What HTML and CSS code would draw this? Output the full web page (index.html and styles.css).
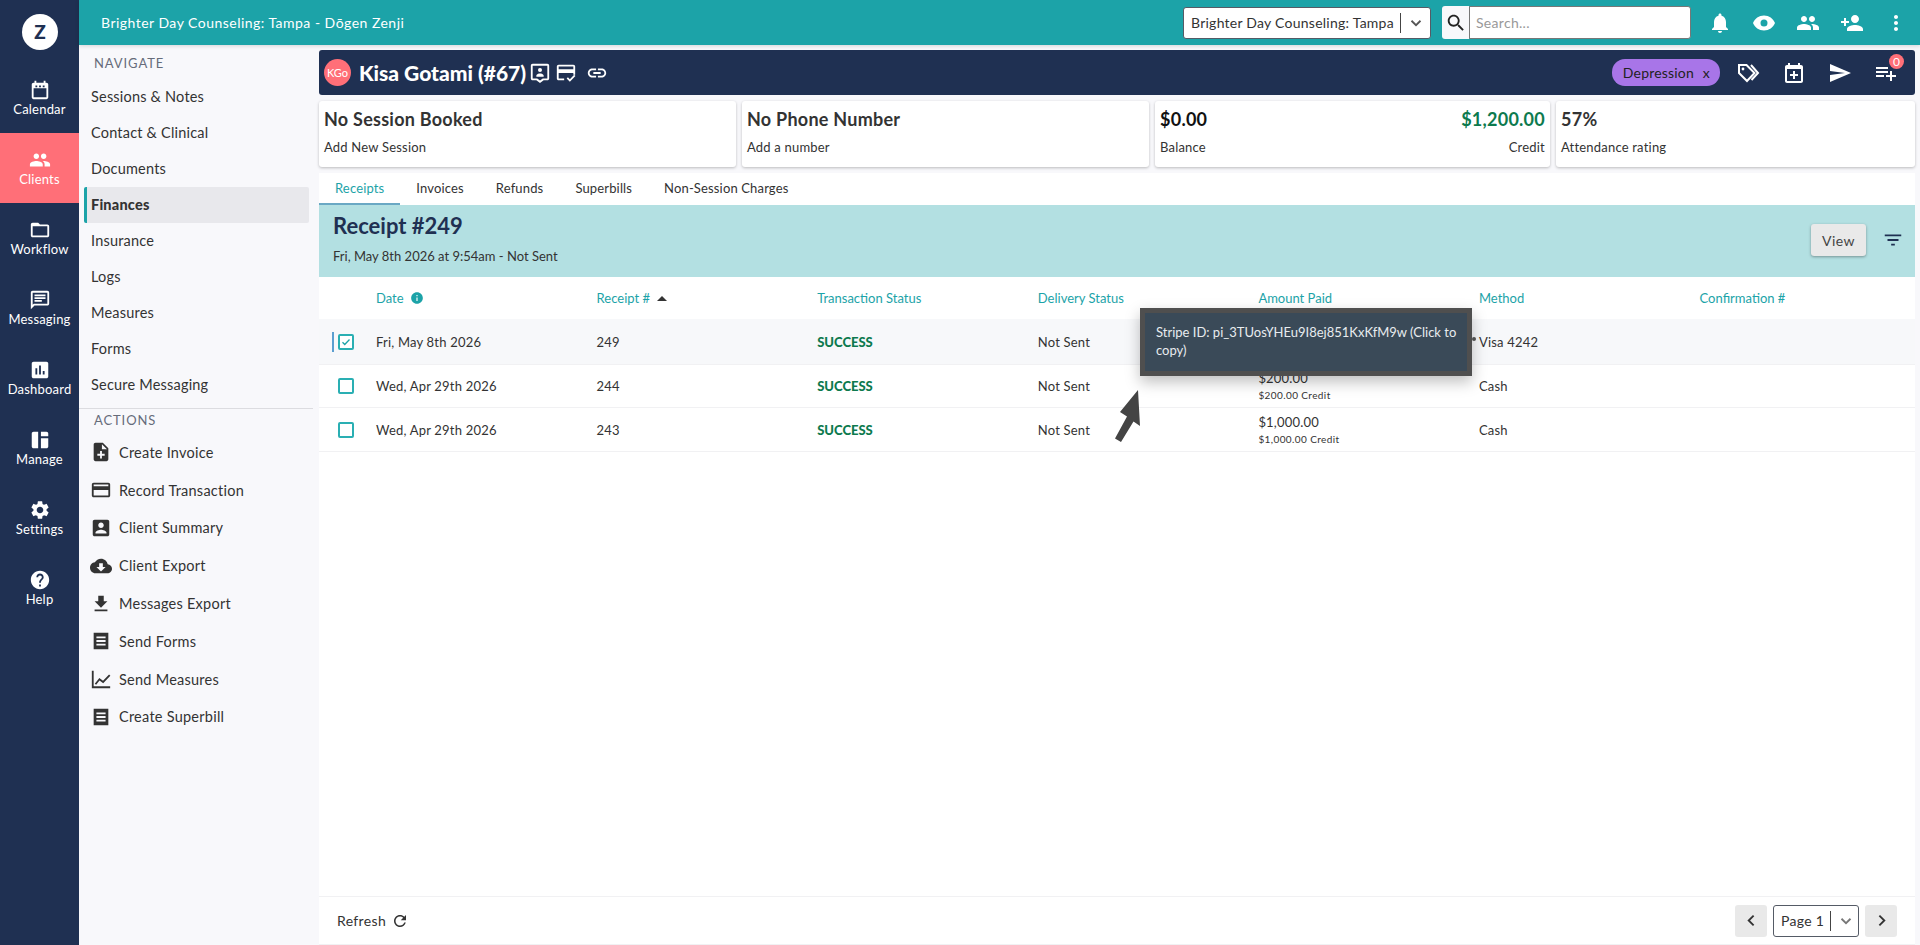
FILE: index.html
```html
<!DOCTYPE html>
<html lang="en">
<head>
    <meta charset="UTF-8">
    <meta name="viewport" content="width=device-width, initial-scale=1.0">
    <title>Receipts</title>
    <link rel="stylesheet" href="styles.css">
</head>
<body>
<div class="app">
    <!-- main rail -->
    <aside class="rail">
        <div class="logo_wrap"><div class="logo">Z</div></div>
        <a class="rail_item">
            <svg viewBox="0 0 24 24"><path d="M19 4h-1V2h-2v2H8V2H6v2H5c-1.1 0-2 .9-2 2v14c0 1.1.9 2 2 2h14c1.1 0 2-.9 2-2V6c0-1.1-.9-2-2-2zm0 16H5V10h14v10zM7 7h2v2H7zm4 0h2v2h-2zm4 0h2v2h-2z"/></svg>
            Calendar
        </a>
        <a class="rail_item on">
            <svg viewBox="0 0 24 24"><path d="M16 11c1.66 0 2.99-1.34 2.99-3S17.66 5 16 5c-1.66 0-3 1.34-3 3s1.34 3 3 3zm-8 0c1.66 0 2.99-1.34 2.99-3S9.66 5 8 5C6.34 5 5 6.34 5 8s1.34 3 3 3zm0 2c-2.33 0-7 1.17-7 3.5V19h14v-2.5c0-2.33-4.67-3.5-7-3.5zm8 0c-.29 0-.62.02-.97.05 1.16.84 1.97 1.97 1.97 3.45V19h6v-2.5c0-2.33-4.67-3.5-7-3.5z"/></svg>
            Clients
        </a>
        <a class="rail_item">
            <svg viewBox="0 0 24 24"><path d="M20 6h-8l-2-2H4c-1.1 0-2 .9-2 2v12c0 1.1.9 2 2 2h16c1.1 0 2-.9 2-2V8c0-1.1-.9-2-2-2zm0 12H4V8h16v10z"/></svg>
            Workflow
        </a>
        <a class="rail_item">
            <svg viewBox="0 0 24 24"><path d="M20 2H4c-1.1 0-2 .9-2 2v18l4-4h14c1.1 0 2-.9 2-2V4c0-1.1-.9-2-2-2zm0 14H5.17L4 17.17V4h16v12zM6 12h8v2H6zm0-3h12v2H6zm0-3h12v2H6z"/></svg>
            Messaging
        </a>
        <a class="rail_item">
            <svg viewBox="0 0 24 24"><path d="M19 3H5c-1.1 0-2 .9-2 2v14c0 1.1.9 2 2 2h14c1.1 0 2-.9 2-2V5c0-1.1-.9-2-2-2zM9 17H7v-7h2v7zm4 0h-2V7h2v10zm4 0h-2v-4h2v4z"/></svg>
            Dashboard
        </a>
        <a class="rail_item">
            <svg viewBox="0 0 24 24"><path d="M5 3h5v18H5c-1.1 0-2-.9-2-2V5c0-1.1.9-2 2-2zm8 0h6c1.1 0 2 .9 2 2v3h-8zm0 7h8v9c0 1.1-.9 2-2 2h-6z"/></svg>
            Manage
        </a>
        <a class="rail_item">
            <svg viewBox="0 0 24 24"><path d="M19.14 12.94c.04-.3.06-.61.06-.94 0-.32-.02-.64-.07-.94l2.03-1.58c.18-.14.23-.41.12-.61l-1.92-3.32c-.12-.22-.37-.29-.59-.22l-2.39.96c-.5-.38-1.03-.7-1.62-.94l-.36-2.54c-.04-.24-.24-.41-.48-.41h-3.84c-.24 0-.43.17-.47.41l-.36 2.54c-.59.24-1.13.57-1.62.94l-2.39-.96c-.22-.08-.47 0-.59.22L2.74 8.87c-.12.21-.08.47.12.61l2.03 1.58c-.05.3-.09.63-.09.94s.02.64.07.94l-2.03 1.58c-.18.14-.23.41-.12.61l1.92 3.32c.12.22.37.29.59.22l2.39-.96c.5.38 1.03.7 1.62.94l.36 2.54c.05.24.24.41.48.41h3.84c.24 0 .44-.17.47-.41l.36-2.54c.59-.24 1.13-.56 1.62-.94l2.39.96c.22.08.47 0 .59-.22l1.92-3.32c.12-.22.07-.47-.12-.61l-2.01-1.58zM12 15.6c-1.98 0-3.6-1.62-3.6-3.6s1.62-3.6 3.6-3.6 3.6 1.62 3.6 3.6-1.62 3.6-3.6 3.6z"/></svg>
            Settings
        </a>
        <a class="rail_item">
            <svg viewBox="0 0 24 24"><path d="M12 2C6.48 2 2 6.48 2 12s4.48 10 10 10 10-4.48 10-10S17.52 2 12 2zm1 17h-2v-2h2v2zm2.07-7.75l-.9.92C13.45 12.9 13 13.5 13 15h-2v-.5c0-1.1.45-2.1 1.17-2.83l1.24-1.26c.37-.36.59-.86.59-1.41 0-1.1-.9-2-2-2s-2 .9-2 2H8c0-2.21 1.79-4 4-4s4 1.79 4 4c0 .88-.36 1.68-.93 2.25z"/></svg>
            Help
        </a>
    </aside>

    <div class="right">
        <!-- top bar -->
        <header class="topbar">
            <div class="practice">Brighter Day Counseling: Tampa - Dōgen Zenji</div>
            <div class="select practice_select">
                <span class="select_text">Brighter Day Counseling: Tampa</span>
                <span class="select_sep"></span>
                <svg viewBox="0 0 24 24"><path d="M6 9l6 6 6-6" fill="none" stroke="#555" stroke-width="2.4"/></svg>
            </div>
            <div class="search">
                <span class="search_btn"><svg viewBox="0 0 24 24"><path d="M15.5 14h-.79l-.28-.27C15.41 12.59 16 11.11 16 9.5 16 5.91 13.09 3 9.5 3S3 5.91 3 9.5 5.91 16 9.5 16c1.61 0 3.09-.59 4.23-1.57l.27.28v.79l5 4.99L20.49 19l-4.99-5zm-6 0C7.01 14 5 11.99 5 9.5S7.01 5 9.5 5 14 7.01 14 9.5 11.99 14 9.5 14z"/></svg></span>
                <span class="search_input">Search...</span>
            </div>
            <div class="top_icons">
                <svg viewBox="0 0 24 24"><path d="M12 22c1.1 0 2-.9 2-2h-4c0 1.1.9 2 2 2zm6-6v-5c0-3.07-1.63-5.64-4.5-6.32V4c0-.83-.67-1.5-1.5-1.5s-1.5.67-1.5 1.5v.68C7.64 5.36 6 7.92 6 11v5l-2 2v1h16v-1l-2-2z"/></svg>
                <svg viewBox="0 0 24 24"><path fill-rule="evenodd" d="M12 4.5C7 4.5 2.73 7.61 1 12c1.73 4.39 6 7.5 11 7.5s9.27-3.11 11-7.5c-1.73-4.39-6-7.5-11-7.5zM12 15.5a3.5 3.5 0 1 1 0-7 3.5 3.5 0 0 1 0 7z"/></svg>
                <svg viewBox="0 0 24 24"><path d="M16 11c1.66 0 2.99-1.34 2.99-3S17.66 5 16 5c-1.66 0-3 1.34-3 3s1.34 3 3 3zm-8 0c1.66 0 2.99-1.34 2.99-3S9.66 5 8 5C6.34 5 5 6.34 5 8s1.34 3 3 3zm0 2c-2.33 0-7 1.17-7 3.5V19h14v-2.5c0-2.33-4.67-3.5-7-3.5zm8 0c-.29 0-.62.02-.97.05 1.16.84 1.97 1.97 1.97 3.45V19h6v-2.5c0-2.33-4.67-3.5-7-3.5z"/></svg>
                <svg viewBox="0 0 24 24"><path d="M15 12c2.21 0 4-1.79 4-4s-1.79-4-4-4-4 1.79-4 4 1.79 4 4 4zm-9-2V7H4v3H1v2h3v3h2v-3h3v-2H6zm9 4c-2.67 0-8 1.34-8 4v2h16v-2c0-2.66-5.33-4-8-4z"/></svg>
                <svg viewBox="0 0 24 24"><path d="M12 8c1.1 0 2-.9 2-2s-.9-2-2-2-2 .9-2 2 .9 2 2 2zm0 2c-1.1 0-2 .9-2 2s.9 2 2 2 2-.9 2-2-.9-2-2-2zm0 6c-1.1 0-2 .9-2 2s.9 2 2 2 2-.9 2-2-.9-2-2-2z"/></svg>
            </div>
        </header>

        <div class="below">
            <!-- client menu -->
            <nav class="side">
                <div class="side_title">NAVIGATE</div>
                <a class="side_link">Sessions &amp; Notes</a>
                <a class="side_link">Contact &amp; Clinical</a>
                <a class="side_link">Documents</a>
                <a class="side_link on">Finances</a>
                <a class="side_link">Insurance</a>
                <a class="side_link">Logs</a>
                <a class="side_link">Measures</a>
                <a class="side_link">Forms</a>
                <a class="side_link">Secure Messaging</a>
                <div class="side_line"></div>
                <div class="side_title actions">ACTIONS</div>
                <a class="side_act"><svg viewBox="0 0 24 24"><path d="M14 2H6c-1.1 0-1.99.9-1.99 2L4 20c0 1.1.89 2 1.99 2H18c1.1 0 2-.9 2-2V8l-6-6zm2 14h-3v3h-2v-3H8v-2h3v-3h2v3h3v2zm-3-7V3.5L18.5 9H13z"/></svg>Create Invoice</a>
                <a class="side_act"><svg viewBox="0 0 24 24"><path d="M20 4H4c-1.11 0-1.99.89-1.99 2L2 18c0 1.11.89 2 2 2h16c1.11 0 2-.89 2-2V6c0-1.11-.89-2-2-2zm0 14H4v-6h16v6zm0-10H4V6h16v2z"/></svg>Record Transaction</a>
                <a class="side_act"><svg viewBox="0 0 24 24"><path d="M3 5v14c0 1.1.89 2 2 2h14c1.1 0 2-.9 2-2V5c0-1.1-.9-2-2-2H5c-1.11 0-2 .9-2 2zm12 4c0 1.66-1.34 3-3 3s-3-1.34-3-3 1.34-3 3-3 3 1.34 3 3zm-9 8c0-2 4-3.1 6-3.1s6 1.1 6 3.1v1H6v-1z"/></svg>Client Summary</a>
                <a class="side_act"><svg viewBox="0 0 24 24"><path d="M19.35 10.04C18.67 6.59 15.64 4 12 4 9.11 4 6.6 5.64 5.35 8.04 2.34 8.36 0 10.91 0 14c0 3.31 2.69 6 6 6h13c2.76 0 5-2.24 5-5 0-2.64-2.05-4.78-4.65-4.96zM17 13l-5 5-5-5h3V9h4v4h3z"/></svg>Client Export</a>
                <a class="side_act"><svg viewBox="0 0 24 24"><path d="M19 9h-4V3H9v6H5l7 7 7-7zM5 18v2h14v-2H5z"/></svg>Messages Export</a>
                <a class="side_act"><svg viewBox="0 0 24 24"><path fill-rule="evenodd" d="M4 3h16v18H4zM7 7v2h10V7zm0 4v2h10v-2zm0 4v2h10v-2z"/></svg>Send Forms</a>
                <a class="side_act"><svg viewBox="0 0 24 24"><path d="M2 3h2v17h18v2H2zM5.2 17.2l5-6.2 4 3 6.6-7 1.4 1.4-7.8 8.3-4-3-3.7 4.7z"/></svg>Send Measures</a>
                <a class="side_act"><svg viewBox="0 0 24 24"><path fill-rule="evenodd" d="M4 3h16v18H4zM7 7v2h10V7zm0 4v2h10v-2zm0 4v2h10v-2z"/></svg>Create Superbill</a>
            </nav>

            <main class="main">
                <div class="client_bar">
                    <div class="avatar">KGo</div>
                    <div class="client_name">Kisa Gotami (#67)</div>
                    <svg class="client_ic" viewBox="0 0 24 24"><path d="M20 2H4c-1.1 0-2 .9-2 2v14c0 1.1.9 2 2 2h4l4 3 4-3h4c1.1 0 2-.9 2-2V4c0-1.1-.9-2-2-2zm0 16h-5l-3 2.3L9 18H4V4h16zM12 11a2.2 2.2 0 1 0 0-4.4 2.2 2.2 0 0 0 0 4.4zm-4 5h8v-1.2c0-1.6-2.7-2.3-4-2.3s-4 .7-4 2.3z"/></svg>
                    <svg class="client_ic" viewBox="0 0 24 24"><path d="M20 3H4c-1.1 0-2 .9-2 2v13c0 1.1.9 2 2 2h6v-2H4v-6h16v2h2V5c0-1.1-.9-2-2-2zm0 5H4V5h16zM16.2 21.5l-3.5-3.5 1.4-1.4 2.1 2.1 4.7-4.7 1.4 1.4z"/></svg>
                    <svg class="client_ic link_ic" viewBox="0 0 24 24"><path d="M3.9 12c0-1.71 1.39-3.1 3.1-3.1h4V7H7c-2.76 0-5 2.24-5 5s2.24 5 5 5h4v-1.9H7c-1.71 0-3.1-1.39-3.1-3.1zM8 13h8v-2H8v2zm9-6h-4v1.9h4c1.71 0 3.1 1.39 3.1 3.1s-1.39 3.1-3.1 3.1h-4V17h4c2.76 0 5-2.24 5-5s-2.24-5-5-5z"/></svg>
                    <div class="client_right">
                        <span class="chip">Depression <b>x</b></span>
                        <svg viewBox="0 0 24 24"><path d="M3 4h7.5l8 8-7.5 8-8-8zM15 4l7 8-6.5 7" fill="none" stroke="currentColor" stroke-width="2"/><circle cx="7" cy="8" r="1.4"/></svg>
                        <svg viewBox="0 0 24 24"><path d="M19 4h-1V2h-2v2H8V2H6v2H5c-1.1 0-2 .9-2 2v14c0 1.1.9 2 2 2h14c1.1 0 2-.9 2-2V6c0-1.1-.9-2-2-2zm0 16H5V8h14zM11 10h2v3h3v2h-3v3h-2v-3H8v-2h3z"/></svg>
                        <svg viewBox="0 0 24 24"><path d="M2.01 21L23 12 2.01 3 2 10l15 2-15 2z"/></svg>
                        <span class="queue">
                            <svg viewBox="0 0 24 24"><path d="M14 10H2v2h12v-2zm0-4H2v2h12V6zm4 8v-4h-2v4h-4v2h4v4h2v-4h4v-2h-4zM2 16h8v-2H2v2z"/></svg>
                            <span class="badge">0</span>
                        </span>
                    </div>
                </div>

                <div class="cards">
                    <div class="card">
                        <div class="card_big">No Session Booked</div>
                        <div class="card_small">Add New Session</div>
                    </div>
                    <div class="card">
                        <div class="card_big">No Phone Number</div>
                        <div class="card_small">Add a number</div>
                    </div>
                    <div class="card">
                        <div class="card_row"><div class="card_big black">$0.00</div><div class="card_big green">$1,200.00</div></div>
                        <div class="card_row"><div class="card_small">Balance</div><div class="card_small">Credit</div></div>
                    </div>
                    <div class="card">
                        <div class="card_big">57%</div>
                        <div class="card_small">Attendance rating</div>
                    </div>
                </div>

                <div class="panel">
                    <div class="tabs">
                        <a class="tab on">Receipts</a>
                        <a class="tab">Invoices</a>
                        <a class="tab">Refunds</a>
                        <a class="tab">Superbills</a>
                        <a class="tab">Non-Session Charges</a>
                    </div>
                    <div class="band">
                        <div>
                            <h1>Receipt #249</h1>
                            <p>Fri, May 8th 2026 at 9:54am - Not Sent</p>
                        </div>
                        <div class="band_right">
                            <button class="view_btn">View</button>
                            <svg viewBox="0 0 24 24"><path d="M10 18h4v-2h-4v2zM3 6v2h18V6H3zm3 7h12v-2H6v2z"/></svg>
                        </div>
                    </div>

                    <div class="grid_row head">
                        <div></div>
                        <div class="head_cell">Date <svg class="info" viewBox="0 0 24 24"><path d="M12 2C6.48 2 2 6.48 2 12s4.48 10 10 10 10-4.48 10-10S17.52 2 12 2zm1 15h-2v-6h2v6zm0-8h-2V7h2v2z"/></svg></div>
                        <div class="head_cell">Receipt # <span class="sort"></span></div>
                        <div class="head_cell">Transaction Status</div>
                        <div class="head_cell">Delivery Status</div>
                        <div class="head_cell">Amount Paid</div>
                        <div class="head_cell">Method</div>
                        <div class="head_cell">Confirmation #</div>
                    </div>
                    <div class="grid_row sel">
                        <div class="check_cell"><span class="check on"><svg viewBox="0 0 24 24"><path d="M5 12.5l4.5 4.5L19 7" fill="none" stroke="#1ca3a8" stroke-width="2.6"/></svg></span></div>
                        <div>Fri, May 8th 2026</div>
                        <div>249</div>
                        <div class="success">SUCCESS</div>
                        <div>Not Sent</div>
                        <div></div>
                        <div>Visa 4242</div>
                        <div></div>
                    </div>
                    <div class="grid_row">
                        <div class="check_cell"><span class="check"></span></div>
                        <div>Wed, Apr 29th 2026</div>
                        <div>244</div>
                        <div class="success">SUCCESS</div>
                        <div>Not Sent</div>
                        <div class="amount">$200.00<small>$200.00 Credit</small></div>
                        <div>Cash</div>
                        <div></div>
                    </div>
                    <div class="grid_row">
                        <div class="check_cell"><span class="check"></span></div>
                        <div>Wed, Apr 29th 2026</div>
                        <div>243</div>
                        <div class="success">SUCCESS</div>
                        <div>Not Sent</div>
                        <div class="amount">$1,000.00<small>$1,000.00 Credit</small></div>
                        <div>Cash</div>
                        <div></div>
                    </div>

                    <div class="foot">
                        <div class="refresh">Refresh <svg viewBox="0 0 24 24"><path d="M17.65 6.35C16.2 4.9 14.21 4 12 4c-4.42 0-7.99 3.58-7.99 8s3.57 8 7.99 8c3.73 0 6.84-2.55 7.73-6h-2.08c-.82 2.33-3.04 4-5.65 4-3.31 0-6-2.69-6-6s2.69-6 6-6c1.66 0 3.14.69 4.22 1.78L13 11h7V4l-2.35 2.35z"/></svg></div>
                        <div class="pager">
                            <span class="page_btn"><svg viewBox="0 0 24 24"><path d="M15 5l-7 7 7 7" fill="none" stroke="#333" stroke-width="2.6"/></svg></span>
                            <div class="select page_select">
                                <span class="select_text">Page 1</span>
                                <span class="select_sep"></span>
                                <svg viewBox="0 0 24 24"><path d="M6 9l6 6 6-6" fill="none" stroke="#777" stroke-width="2.4"/></svg>
                            </div>
                            <span class="page_btn"><svg viewBox="0 0 24 24"><path d="M9 5l7 7-7 7" fill="none" stroke="#333" stroke-width="2.6"/></svg></span>
                        </div>
                    </div>
                </div>
            </main>
        </div>
    </div>

    <!-- over the table -->
    <div class="tip">Stripe ID: pi_3TUosYHEu9I8ej851KxKfM9w (Click to copy)</div>
    <svg class="arrow" viewBox="0 0 30 54"><path d="M25 1L27 37 20.5 32.5 8 53 2 49.5 14 27.5 7 23z"/></svg>
</div>
</body>
</html>
```

FILE: styles.css
```css
*{margin:0;padding:0;box-sizing:border-box;}
html,body{height:100%;overflow:hidden;}
body{font-family:"Lato","Liberation Sans",sans-serif;font-size:14px;color:#333;background:#f8f8fb;}
a{display:block;}
svg{display:block;fill:currentColor;}

.app{position:relative;display:flex;height:945px;}
.right{flex:1;display:flex;flex-direction:column;min-width:0;}
.below{flex:1;display:flex;min-height:0;}

/* rail */
.rail{width:79px;flex:none;background:#1f3052;color:#fff;}
.logo_wrap{height:63px;padding:14px 0 0 22px;}
.logo{width:36px;height:36px;border-radius:50%;background:#fff;color:#1f3052;font-weight:900;font-size:19px;line-height:36px;text-align:center;}
.rail_item{height:70px;padding-top:16px;display:flex;flex-direction:column;align-items:center;font-size:13px;line-height:18px;letter-spacing:.2px;}
.rail_item svg{width:22px;height:22px;margin-bottom:-1px;}
.rail_item.on{background:#ff6f78;}

/* top bar */
.topbar{height:45px;flex:none;display:flex;align-items:center;padding:0 12px 0 22px;background:#1ca3a8;color:#fff;box-shadow:0 1px 4px rgba(0,0,0,.15);position:relative;}
.practice{font-size:14px;letter-spacing:.48px;flex:1;}
.select{display:flex;align-items:center;background:#fff;border:1px solid #555b66;border-radius:3px;color:#333;}
.select_text{white-space:nowrap;}
.select_sep{width:1px;height:20px;background:#444;}
.select svg{width:18px;height:18px;}
.practice_select{width:248px;height:32px;padding-left:7px;margin-right:11px;gap:6px;font-size:14px;letter-spacing:.25px;}
.search{display:flex;height:33px;width:249px;margin-right:17px;}
.search_btn{width:27px;background:#f8f8fb;color:#222;border-radius:3px 0 0 3px;display:flex;align-items:center;justify-content:center;}
.search_btn svg{width:22px;height:22px;}
.search_input{flex:1;background:#fff;border:1px solid #777;border-radius:0 3px 3px 0;color:#999;padding:7px 6px;font-size:14px;letter-spacing:.3px;}
.top_icons{display:flex;gap:20px;}
.top_icons svg{width:24px;height:24px;}

/* client menu */
.side{width:240px;flex:none;padding-top:9px;background:#f8f8fb;}
.side_title{padding-left:15px;font-size:13px;line-height:18px;letter-spacing:.9px;color:#666c7a;}
.side_link{height:36px;margin:0 10px 0 5px;padding-left:7px;line-height:36px;font-size:14.5px;letter-spacing:.2px;color:#333;}
.side_title + .side_link{margin-top:6.5px;}
.side_link.on{background:#e8e8ec;border-left:3px solid #1ca3a8;padding-left:4px;font-weight:900;border-radius:2px;letter-spacing:.2px;}
.side_line{height:1px;margin:5px 6px 0 0;background:#dcdce0;}
.side_title.actions{margin-top:2px;}
.side_act{display:flex;align-items:center;gap:7px;height:37.8px;padding-left:11px;font-size:14.5px;letter-spacing:.25px;color:#333;}
.side_title.actions + .side_act{margin-top:5px;}
.side_act svg{width:22px;height:22px;flex:none;}

/* main */
.main{flex:1;min-width:0;display:flex;flex-direction:column;padding:5px 5px 0 0;}
.client_bar{height:45px;flex:none;display:flex;align-items:center;padding-left:5px;background:#1f3052;color:#fff;border-radius:3px;}
.avatar{width:27px;height:27px;border-radius:50%;background:#ff6f78;font-size:11px;line-height:27px;text-align:center;}
.client_name{margin:0 3px 0 8px;font-size:21px;font-weight:900;}
.client_ic{width:22px;height:22px;margin-right:4px;}
.link_ic{margin-left:5px;}
.client_right{margin-left:auto;display:flex;align-items:center;gap:22px;padding-right:17px;}
.client_right svg{width:24px;height:24px;}
.chip{height:27px;padding:0 10px 0 11px;margin-right:-6px;background:#a875e8;color:#222;border-radius:13px;line-height:27px;letter-spacing:.2px;}
.chip b{font-weight:400;margin-left:5px;}
.queue{position:relative;}
.badge{position:absolute;top:-7px;right:-6px;width:15px;height:15px;border-radius:50%;background:#ff6f78;font-size:12px;line-height:15px;text-align:center;}

.cards{display:grid;grid-template-columns:417px 407px 395px 1fr;gap:6px;height:66px;margin-top:6px;flex:none;}
.card{padding:6px 5px 0;background:#fff;border-radius:3px;box-shadow:0 1px 3px rgba(0,0,0,.25);}
.card_row{display:flex;justify-content:space-between;}
.card_big{font-size:18px;line-height:24px;font-weight:700;letter-spacing:.25px;color:#333;}
.card_big.black{color:#111;}
.card_big.green{color:#0d7a4e;}
.card_small{margin-top:6px;font-size:13px;line-height:20px;letter-spacing:.2px;color:#333;}

.panel{flex:1;margin-top:6px;background:#fff;display:flex;flex-direction:column;min-height:0;}
.tabs{display:flex;height:32px;flex:none;}
.tab{padding:0 16px;line-height:31px;font-size:13px;letter-spacing:.15px;}
.tab.on{color:#1ca3a8;border-bottom:2px solid #6aa8c4;}
.band{height:72px;flex:none;display:flex;justify-content:space-between;padding:7px 11px 0 14px;background:#b3e0e2;color:#1f3052;}
.band h1{font-size:22px;line-height:28px;font-weight:700;}
.band p{margin-top:7px;font-size:13px;line-height:18px;color:#333;}
.band_right{display:flex;align-items:flex-start;gap:16px;padding-top:12px;}
.band_right svg{width:22px;height:22px;margin-top:5px;}
.view_btn{width:55px;height:32px;border:0;border-radius:3px;background:#e9e9e9;font:14px "Lato",sans-serif;letter-spacing:.5px;color:#444;box-shadow:0 1px 3px rgba(0,0,0,.35);}

.grid_row{display:grid;grid-template-columns:57px repeat(6,220.6px) 1fr;align-items:center;height:44px;border-bottom:1px solid #f1f1f3;font-size:13px;letter-spacing:.2px;color:#333;}
.grid_row.head{height:42px;border-bottom:0;letter-spacing:0;}
.grid_row.sel{background:#f7f8fa;height:46px;}
.grid_row.sel + .grid_row{height:43px;}
.head_cell{display:flex;align-items:center;gap:6px;color:#1ca3a8;}
.info{width:14px;height:14px;}
.sort{width:0;height:0;margin-left:1px;border:5px solid transparent;border-top:0;border-bottom:5px solid #333;}
.check_cell{position:relative;padding-left:19px;}
.check{display:block;width:16px;height:16px;border:2px solid #2aafb3;border-radius:2px;background:#fff;}
.check svg{width:12px;height:12px;}
.sel .check_cell::before{content:"";position:absolute;left:13px;top:-2px;width:2px;height:20px;background:#5b9fd0;}
.success{font-weight:900;color:#0d7a4e;letter-spacing:0;}
.amount{line-height:18px;}
.amount small{display:block;font-size:10px;line-height:16px;letter-spacing:.4px;}

.foot{margin-top:auto;height:49px;flex:none;display:flex;justify-content:space-between;align-items:center;padding:0 18px 0 18px;border-top:1px solid #f1f1f3;border-bottom:1px solid #f1f1f3;}
.refresh{display:flex;align-items:center;gap:5px;font-size:14px;letter-spacing:.35px;}
.refresh svg{width:18px;height:18px;}
.pager{display:flex;align-items:center;gap:6px;}
.page_btn{width:32px;height:32px;background:#e9e9e9;border-radius:3px;display:flex;align-items:center;justify-content:center;}
.page_btn svg{width:17px;height:17px;}
.page_select{width:86px;height:32px;padding-left:7px;gap:6px;font-size:14px;letter-spacing:.3px;}

/* tooltip and arrow lie over the table */
.tip{position:absolute;left:1140px;top:308px;width:332px;height:68px;padding:10px 4px 10px 11px;background:#3a4a58;border:5px solid #4f4f4f;color:#e8ecef;font-size:13px;line-height:18px;box-shadow:0 6px 14px rgba(0,0,0,.25);}
.tip::after{content:"";position:absolute;right:-9px;top:24px;width:4px;height:4px;border-radius:50%;background:#4f4f4f;}
.arrow{position:absolute;left:1113px;top:389px;width:30px;height:54px;fill:#444;}
```
